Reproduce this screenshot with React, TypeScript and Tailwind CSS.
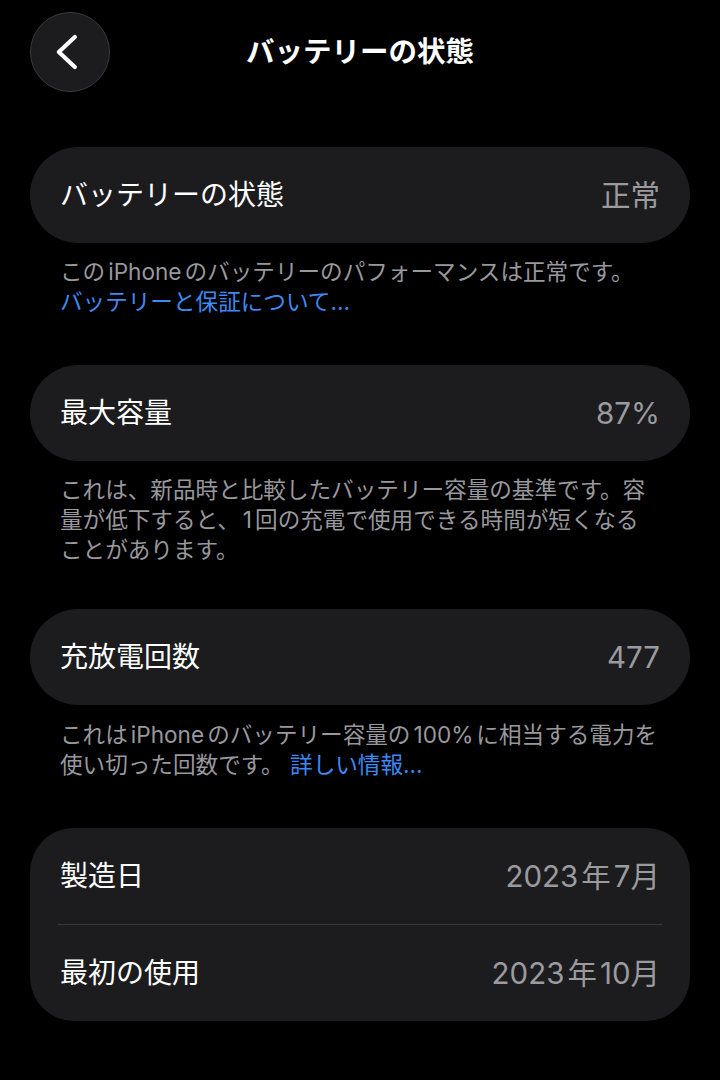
import React from 'react';

const FONT = 'font-[Inter,"Noto_Sans_CJK_JP",sans-serif]';

const Latin = ({ children }: { children: React.ReactNode }) => (
  <span className="mx-[3px]">{children}</span>
);

const Row = ({ label, value }: { label: string; value: React.ReactNode }) => (
  <div className="flex h-[96px] items-center justify-between px-[30px]">
    <span className="text-[28px] text-white">{label}</span>
    <span className="text-[29.5px] text-[#9a9a9f]">{value}</span>
  </div>
);

const Note = ({ lines, className = '' }: { lines: React.ReactNode[]; className?: string }) => (
  <div className={`px-[30px] text-[22.6px] leading-[30px] text-[#98989d] ${className}`}>
    {lines.map((line, i) => (
      <div key={i} className="whitespace-nowrap">
        {line}
      </div>
    ))}
  </div>
);

export default function App() {
  return (
    <div className={`min-h-[1080px] w-[720px] bg-black px-[30px] ${FONT}`}>
      {/* header */}
      <div className="grid grid-cols-[80px_1fr_80px] items-center pt-[12px]">
        <button className="flex h-[80px] w-[80px] items-center justify-center rounded-full border border-[#3a3a3d] bg-[#1c1c1e]">
          <svg width="80" height="80" viewBox="0 0 80 80" fill="none">
            <path
              d="M45 24.5 L28.5 40 L45 55.5"
              stroke="white"
              strokeWidth="4.2"
              strokeLinecap="round"
              strokeLinejoin="round"
            />
          </svg>
        </button>
        <h1 className="text-center text-[28.5px] font-bold text-white">バッテリーの状態</h1>
        <div />
      </div>

      {/* battery state */}
      <div className="mt-[55px] rounded-full bg-[#1c1c1e]">
        <Row label="バッテリーの状態" value="正常" />
      </div>
      <Note
        className="mt-[14px]"
        lines={[
          <>
            この<Latin>iPhone</Latin>のバッテリーのパフォーマンスは正常です。
          </>,
          <span className="text-[#3d8af3]">バッテリーと保証について...</span>,
        ]}
      />

      {/* max capacity */}
      <div className="mt-[48px] rounded-full bg-[#1c1c1e]">
        <Row label="最大容量" value="87%" />
      </div>
      <Note
        className="mt-[14px]"
        lines={[
          'これは、新品時と比較したバッテリー容量の基準です。容',
          <>
            量が低下すると、<Latin>1</Latin>回の充電で使用できる時間が短くなる
          </>,
          'ことがあります。',
        ]}
      />

      {/* cycle count */}
      <div className="mt-[44px] rounded-full bg-[#1c1c1e]">
        <Row label="充放電回数" value="477" />
      </div>
      <Note
        className="mt-[15px]"
        lines={[
          <>
            これは<Latin>iPhone</Latin>のバッテリー容量の<Latin>100%</Latin>に相当する電力を
          </>,
          <>
            使い切った回数です。 <span className="text-[#3d8af3]">詳しい情報...</span>
          </>,
        ]}
      />

      {/* dates */}
      <div className="mt-[48px] rounded-[44px] bg-[#1c1c1e]">
        <Row
          label="製造日"
          value={
            <>
              2023<span className="mx-[3px]">年</span>7月
            </>
          }
        />
        <div className="mx-[28px] h-px bg-[#3a3a3c]" />
        <Row
          label="最初の使用"
          value={
            <>
              2023<span className="mx-[3px]">年</span>10月
            </>
          }
        />
      </div>
    </div>
  );
}
